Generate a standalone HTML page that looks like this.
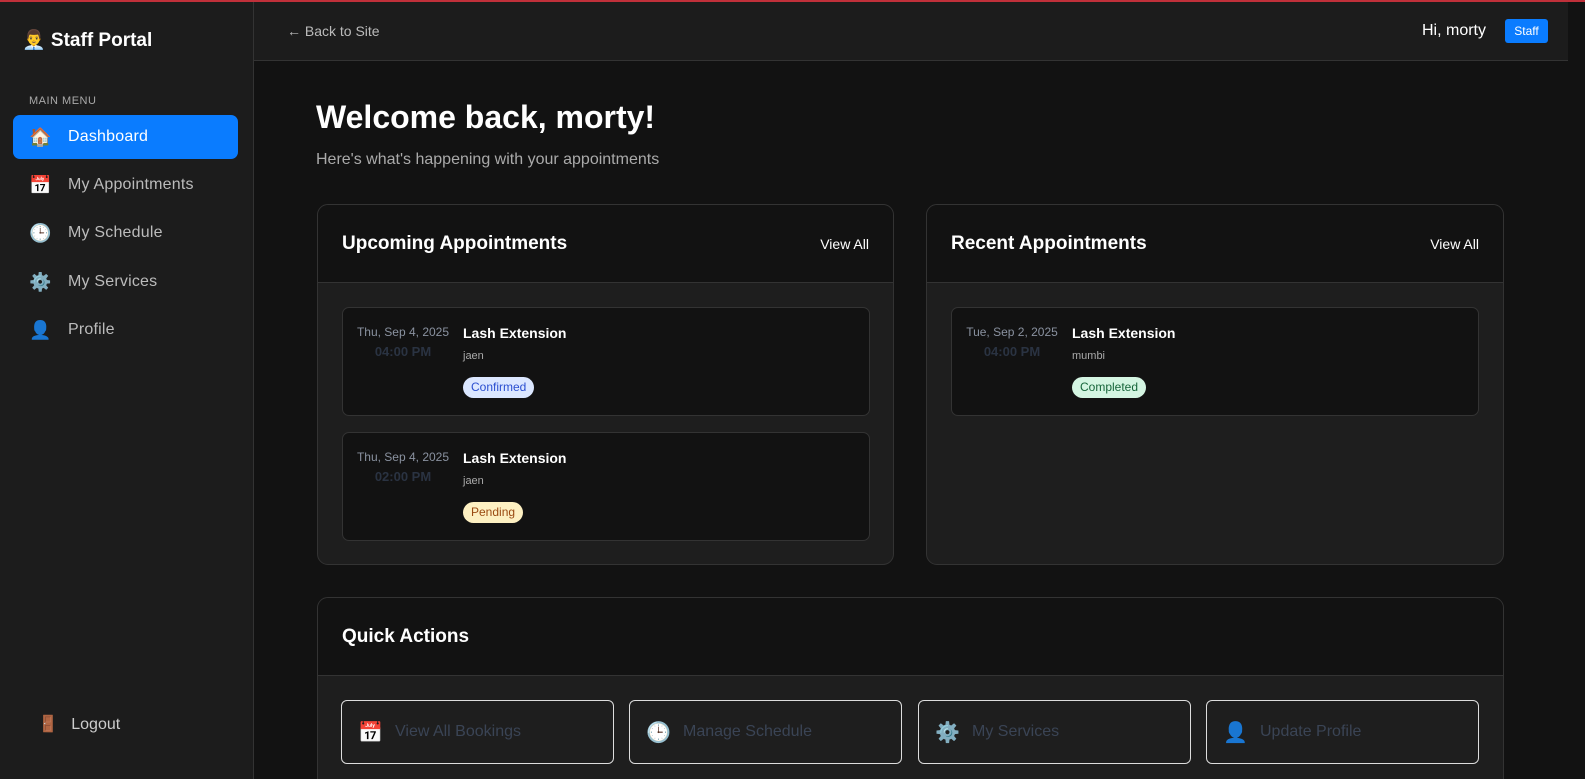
<!DOCTYPE html>
<html style="background:#121212;width:1585px;height:779px;overflow:hidden"><head><meta charset="utf-8"><style>
*{box-sizing:border-box;margin:0;padding:0}
body{width:1585px;height:779px;overflow:hidden;background:#121212;font-family:"Liberation Sans","DejaVu Sans",sans-serif;color:#fff;position:relative}
.topline{position:absolute;left:0;top:0;width:1585px;height:2px;background:#c0303a;z-index:5}
.side{position:absolute;left:0;top:0;width:254px;height:779px;background:#1c1c1c;border-right:1px solid #333}
.logo{position:absolute;left:22px;top:28px;font-size:19px;font-weight:bold}
.mm{position:absolute;left:29px;top:95px;font-size:11px;color:#aaa;letter-spacing:.5px}
.nav{position:absolute;left:13px;width:225px;height:44px;border-radius:7px;font-size:16px;color:#bbb;display:flex;align-items:center;letter-spacing:.2px}
.nav .i{width:55px;text-align:center;font-size:18px}
.nav.a{background:#0a7cff;color:#fff}
.logout{position:absolute;left:38px;top:714px;font-size:16px;color:#ccc}
.hdr{position:absolute;left:254px;top:0;width:1314px;height:61px;background:#1c1c1c;border-bottom:1px solid #333}
.back{position:absolute;left:33px;top:23px;font-size:14px;color:#bbb}
.hi{position:absolute;left:1168px;top:22px;font-size:16px}
.staff{position:absolute;left:1251px;top:19px;width:43px;height:24px;background:#0a7cff;border-radius:3px;font-size:12px;text-align:center;line-height:24px}
.rs{position:absolute;left:1568px;top:61px;width:17px;height:718px;background:#121212}
h1{position:absolute;left:316px;top:99px;font-size:32px;font-weight:bold}
.sub{position:absolute;left:316px;top:151px;font-size:16px;color:#aaa}
.card{position:absolute;border:1px solid #333;border-radius:11px;overflow:hidden;background:#1e1e1e}
.ch{height:78px;background:#121212;border-bottom:1px solid #333;display:flex;justify-content:space-between;align-items:center;padding:0 24px}
.ch b{font-size:19px}
.ch span{font-size:14px}
.ap{position:absolute;left:24px;width:528px;height:109px;background:#121212;border:1px solid #333;border-radius:7px}
.dt{position:absolute;left:0;width:120px;text-align:center;top:17px;font-size:12px;color:#8a92a0}
.tm{position:absolute;left:0;width:120px;text-align:center;top:36px;font-size:13px;color:#2a3342;font-weight:bold}
.sv{position:absolute;left:120px;top:17px;font-size:14px;font-weight:bold}
.cl{position:absolute;left:120px;top:42px;font-size:11px;color:#aaa}
.bd{position:absolute;left:120px;top:69px;height:21px;border-radius:11px;font-size:12px;line-height:21px;padding:0 8px}
.qa{position:absolute;top:700px;width:273px;height:64px;border:1px solid #ddd;border-radius:6px;display:flex;align-items:center;padding-left:16px;font-size:16px;color:#3a4455}
.qa i{font-style:normal;font-size:20px;width:37px}
</style></head><body>
<div class="topline"></div>
<div class="side">
<div class="logo">👨‍💼 Staff Portal</div>
<div class="mm">MAIN MENU</div>
<div class="nav a" style="top:115px"><span class="i">🏠</span>Dashboard</div>
<div class="nav" style="top:163px"><span class="i">📅</span>My Appointments</div>
<div class="nav" style="top:211px"><span class="i">🕒</span>My Schedule</div>
<div class="nav" style="top:260px"><span class="i">⚙️</span>My Services</div>
<div class="nav" style="top:308px"><span class="i">👤</span>Profile</div>
<div class="logout">🚪&nbsp;&nbsp; Logout</div>
</div>
<div class="hdr"><div class="back">← Back to Site</div><div class="hi">Hi, morty</div><div class="staff">Staff</div></div>
<div class="rs"></div>
<h1>Welcome back, morty!</h1>
<div class="sub">Here's what's happening with your appointments</div>
<div class="card" style="left:317px;top:204px;width:577px;height:361px">
<div class="ch"><b>Upcoming Appointments</b><span>View All</span></div>
<div class="ap" style="top:102px"><div class="dt">Thu, Sep 4, 2025</div><div class="tm">04:00 PM</div><div class="sv">Lash Extension</div><div class="cl">jaen</div><div class="bd" style="background:#dbe7ff;color:#2b4fd0">Confirmed</div></div>
<div class="ap" style="top:227px"><div class="dt">Thu, Sep 4, 2025</div><div class="tm">02:00 PM</div><div class="sv">Lash Extension</div><div class="cl">jaen</div><div class="bd" style="background:#fdf0c2;color:#9a4a12">Pending</div></div>
</div>
<div class="card" style="left:926px;top:204px;width:578px;height:361px">
<div class="ch"><b>Recent Appointments</b><span>View All</span></div>
<div class="ap" style="top:102px"><div class="dt">Tue, Sep 2, 2025</div><div class="tm">04:00 PM</div><div class="sv">Lash Extension</div><div class="cl">mumbi</div><div class="bd" style="background:#d4f5e2;color:#17653a">Completed</div></div>
</div>
<div class="card" style="left:317px;top:597px;width:1187px;height:200px">
<div class="ch"><b>Quick Actions</b></div>
</div>
<div class="qa" style="left:341px"><i>📅</i>View All Bookings</div>
<div class="qa" style="left:629px"><i>🕒</i>Manage Schedule</div>
<div class="qa" style="left:918px"><i>⚙️</i>My Services</div>
<div class="qa" style="left:1206px"><i>👤</i>Update Profile</div>
</body></html>
